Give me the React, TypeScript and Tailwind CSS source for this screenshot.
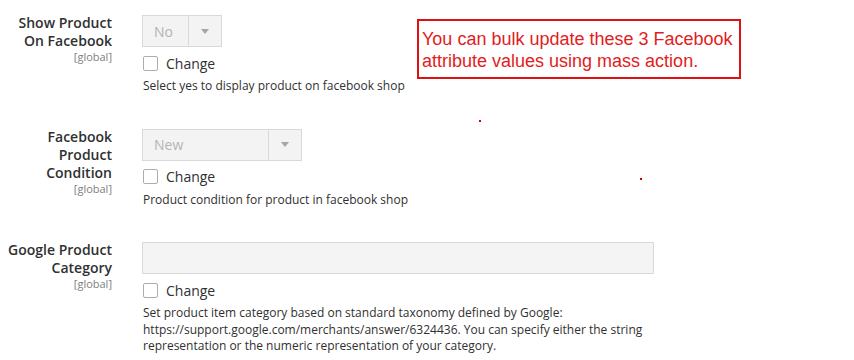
import React from 'react';

type Row = {
  label: string[];
  control: React.ReactNode;
  help: string[];
};

const DisabledSelect: React.FC<{ value: string; width: string }> = ({ value, width }) => (
  <div className={`flex h-[32px] ${width} border border-[#d9d9d9] bg-[#f3f3f3]`}>
    <div className="flex flex-1 items-center pl-[11px] text-[14px] text-[#b3b3b3]">{value}</div>
    <div className="flex w-[33px] items-center justify-center border-l border-[#d9d9d9]">
      <svg width="8" height="5" viewBox="0 0 8 5">
        <path d="M0 0 L8 0 L4 5 Z" fill="#a6a6a6" />
      </svg>
    </div>
  </div>
);

const rows: Row[] = [
  {
    label: ['Show Product', 'On Facebook'],
    control: <DisabledSelect value="No" width="w-[80px]" />,
    help: ['Select yes to display product on facebook shop'],
  },
  {
    label: ['Facebook', 'Product', 'Condition'],
    control: <DisabledSelect value="New" width="w-[160px]" />,
    help: ['Product condition for product in facebook shop'],
  },
  {
    label: ['Google Product', 'Category'],
    control: <div className="h-[32px] w-[512px] border border-[#d9d9d9] bg-[#f4f4f4]" />,
    help: [
      'Set product item category based on standard taxonomy defined by Google:',
      'https://support.google.com/merchants/answer/6324436. You can specify either the string',
      'representation or the numeric representation of your category.',
    ],
  },
];

const App: React.FC = () => {
  return (
    <div className="relative h-[360px] w-[854px] overflow-hidden bg-white font-['Open_Sans',sans-serif] text-[#303030]">
      <div className="flex flex-col gap-[34px] pt-[15px]">
        {rows.map((row) => (
          <div key={row.label.join(' ')} className="flex gap-[30px]">
            {/* label column */}
            <div className="w-[112px] shrink-0 text-right">
              <div className="-mt-[1px] text-[14px] font-semibold leading-[18px]">
                {row.label.map((l) => (
                  <div key={l}>{l}</div>
                ))}
              </div>
              <div className="text-[11px] leading-[13px] text-[#808080]">[global]</div>
            </div>

            {/* control column */}
            <div className="flex flex-col">
              {row.control}
              <label className="mt-[4px] flex h-[24px] items-center gap-[8px]">
                <span className="ml-[1px] h-[15px] w-[15px] rounded-[2px] border border-[#adadad] bg-white" />
                <span className="text-[14px] text-[#303030]">Change</span>
              </label>
              <div className="mt-[3px] pl-[1px] text-[12px] leading-[16.5px]">
                {row.help.map((h) => (
                  <div key={h}>{h}</div>
                ))}
              </div>
            </div>
          </div>
        ))}
      </div>

      {/* annotation */}
      <div className="absolute left-[417px] top-[19px] h-[60px] w-[324px] border-2 border-[#dd1111] px-[3px] pt-[7px] font-['Liberation_Sans',Arial,sans-serif] text-[18px] leading-[22px] text-[#e31c1c]">
        You can bulk update these 3 Facebook
        <br />
        attribute values using mass action.
      </div>
      <span className="absolute left-[479px] top-[120px] h-[2px] w-[2px] bg-[#cc0000]" />
      <span className="absolute left-[640px] top-[178px] h-[2px] w-[2px] bg-[#cc0000]" />
    </div>
  );
};

export default App;
